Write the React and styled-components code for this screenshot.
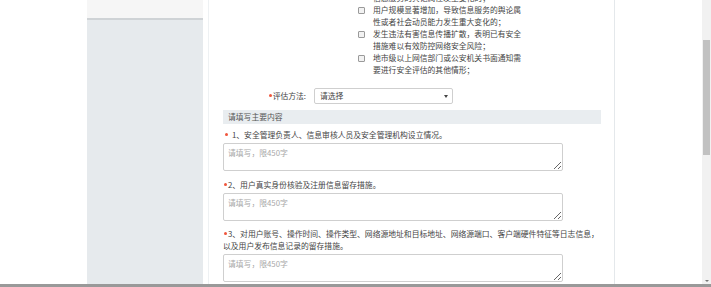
import styled, { createGlobalStyle } from 'styled-components';

const GlobalStyle = createGlobalStyle`
  html, body {
    margin: 0;
    padding: 0;
    background: #fff;
    overflow: hidden;
  }
  body {
    font-family: "Noto Sans CJK SC", "Noto Sans", sans-serif;
  }
`;

const Page = styled.div`
  width: 711px;
  height: 287px;
  display: flex;
  flex-direction: column;
  overflow: hidden;
`;

const Body = styled.div`
  flex: 1;
  display: flex;
  min-height: 0;
`;

const LeftBlank = styled.div`
  width: 87px;
  flex-shrink: 0;
`;

const Sidebar = styled.div`
  width: 116px;
  flex-shrink: 0;
  display: flex;
  flex-direction: column;
`;

const SidebarTop = styled.div`
  height: 18px;
  background: #f6f6f6;
  border-bottom: 2px solid #cfd3d6;
`;

const SidebarBody = styled.div`
  flex: 1;
  background: #e6eaed;
`;

const Spacer = styled.div`
  width: ${p => p.w}px;
  flex-shrink: 0;
`;

const Main = styled.div`
  width: 407px;
  box-sizing: border-box;
  flex-shrink: 0;
  border-left: 1px solid #eef1f3;
  border-right: 1px solid #e4e8eb;
  padding: 0 13px 0 14px;
  overflow: hidden;
  font-size: 7.8px;
  line-height: 12px;
  color: #444;
`;

const RightBlank = styled.div`
  flex: 1;
`;

const Scrollbar = styled.div`
  width: 9px;
  flex-shrink: 0;
  background: #f1f1f1;
  display: flex;
  flex-direction: column;
  align-items: center;
`;

const Thumb = styled.div`
  width: 7px;
  height: 115px;
  margin-top: 40px;
  background: #c1c1c1;
`;

const ArrowDown = styled.div`
  margin-top: auto;
  margin-bottom: 2px;
  width: 0;
  height: 0;
  border-left: 2px solid transparent;
  border-right: 2px solid transparent;
  border-top: 2px solid #777;
`;

const BottomEdge = styled.div`
  height: 3px;
  background: #999;
  flex-shrink: 0;
`;

const CheckList = styled.div`
  margin-left: 135px;
  margin-top: ${p => p.offset}px;
  display: flex;
  flex-direction: column;
`;

const CheckItem = styled.label`
  display: flex;
  align-items: flex-start;
  gap: 8px;
`;

const Box = styled.span`
  width: 5px;
  height: 5px;
  margin-top: 3px;
  flex-shrink: 0;
  border: 1px solid #9a9a9a;
  border-radius: 1px;
  background: #f2f2f2;
`;

const CheckText = styled.span`
  width: 150px;
`;

const FieldRow = styled.div`
  display: flex;
  align-items: center;
  margin-top: 12px;
`;

const FieldLabel = styled.span`
  width: 83px;
  display: flex;
  align-items: center;
  justify-content: flex-end;
  margin-right: 8px;
`;

const Req = styled.span`
  display: inline-block;
  width: 3px;
  height: 3px;
  border-radius: 50%;
  background: #f0553c;
  vertical-align: middle;
  margin-left: ${p => p.left || 0}px;
  margin-right: ${p => p.gap || 0}px;
  position: relative;
  top: -1px;
`;

const Select = styled.div`
  width: 139px;
  height: 16px;
  box-sizing: border-box;
  border: 1px solid #cfcfcf;
  border-radius: 2px;
  display: flex;
  align-items: center;
  justify-content: space-between;
  padding: 0 4px 0 5px;
`;

const Caret = styled.span`
  width: 0;
  height: 0;
  border-left: 2px solid transparent;
  border-right: 2px solid transparent;
  border-top: 3px solid #444;
`;

const SectionHead = styled.div`
  margin-top: 6px;
  height: 14px;
  line-height: 14px;
  background: #e9edf0;
  padding-left: 5px;
  color: #555;
`;

const Question = styled.div`
  margin-top: ${p => p.mt}px;
  white-space: nowrap;
`;

const Area = styled.textarea`
  display: block;
  margin-top: 2px;
  width: 340px;
  height: 28px;
  box-sizing: border-box;
  border: 1px solid #cfcfcf;
  border-radius: 2px;
  padding: 3px 4px;
  font-family: inherit;
  font-size: 7.8px;
  line-height: 12px;
  outline: none;
  &::placeholder {
    color: #a8a8a8;
  }
`;

const checks = [
  '新技术新应用上线或者功能调整，可能造成信息服务的舆论属性发生变化的；',
  '用户规模显著增加，导致信息服务的舆论属性或者社会动员能力发生重大变化的；',
  '发生违法有害信息传播扩散，表明已有安全措施难以有效防控网络安全风险；',
  '地市级以上网信部门或公安机关书面通知需要进行安全评估的其他情形；',
];

const questions = [
  { no: '1', mt: 5, left: 2, gap: 4, lines: ['、安全管理负责人、信息审核人员及安全管理机构设立情况。'] },
  { no: '2', mt: 8, left: 1, gap: 1, lines: ['、用户真实身份核验及注册信息留存措施。'] },
  {
    no: '3',
    mt: 7,
    left: 1,
    gap: 1,
    lines: [
      '、对用户账号、操作时间、操作类型、网络源地址和目标地址、网络源端口、客户端硬件特征等日志信息，',
      '以及用户发布信息记录的留存措施。',
    ],
  },
];

export default function App() {
  return (
    <Page>
      <GlobalStyle />
      <Body>
        <LeftBlank />
        <Sidebar>
          <SidebarTop />
          <SidebarBody />
        </Sidebar>
        <Spacer w={5} />
        <Main>
          <CheckList offset={-20}>
            {checks.map(c => (
              <CheckItem key={c}>
                <Box />
                <CheckText>{c}</CheckText>
              </CheckItem>
            ))}
          </CheckList>
          <FieldRow>
            <FieldLabel>
              <Req gap={1} />评估方法:
            </FieldLabel>
            <Select>
              请选择
              <Caret />
            </Select>
          </FieldRow>
          <SectionHead>请填写主要内容</SectionHead>
          {questions.map(q => (
            <div key={q.no}>
              <Question mt={q.mt}>
                <Req left={q.left} gap={q.gap} />
                {q.no}
                {q.lines[0]}
                {q.lines.slice(1).map(l => (
                  <div key={l}>{l}</div>
                ))}
              </Question>
              <Area placeholder="请填写，限450字" />
            </div>
          ))}
        </Main>
        <RightBlank />
        <Scrollbar>
          <Thumb />
          <ArrowDown />
        </Scrollbar>
      </Body>
      <BottomEdge />
    </Page>
  );
}
